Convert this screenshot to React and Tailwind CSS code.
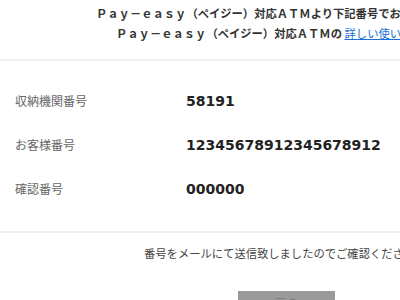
import React from 'react';

const rows = [
  { label: '収納機関番号', value: '58191' },
  { label: 'お客様番号', value: '12345678912345678912' },
  { label: '確認番号', value: '000000' },
];

const PayeasyInfo = () => {
  return (
    <div className="w-[400px] h-[300px] overflow-hidden bg-white font-['Noto_Sans_CJK_JP',sans-serif]">
      {/* header note */}
      <div className="pt-[3px] whitespace-nowrap text-[11.3px] leading-[20px] font-bold text-[#333]">
        <p className="pl-[96px]">Ｐａｙ－ｅａｓｙ（ペイジー）対応ＡＴＭより下記番号でお支払いください。</p>
        <p className="pl-[116px]">
          Ｐａｙ－ｅａｓｙ（ペイジー）対応ＡＴＭの{' '}
          <a href="#" className="font-normal text-[#1a6fd9] underline">詳しい使い方はこちら</a>
        </p>
      </div>

      <div className="mt-[16px] h-[2px] bg-[#efefef]" />

      {/* numbers */}
      <div className="pt-[18px]">
        {rows.map((row) => (
          <div key={row.label} className="flex items-center h-[44px]">
            <span className="w-[186px] pl-[15px] text-[12px] text-[#666]">{row.label}</span>
            <span className="font-['DejaVu_Sans',sans-serif] font-bold text-[14px] text-[#222]">{row.value}</span>
          </div>
        ))}
      </div>

      <div className="mt-[20px] h-[2px] bg-[#efefef]" />

      <p className="mt-[10px] pl-[144px] whitespace-nowrap text-[11.3px] leading-[20px] text-[#444]">
        番号をメールにて送信致しましたのでご確認ください。
      </p>

      <div className="mt-[28px] ml-[238px] w-[97px] h-[36px] bg-[#9a9a9a] flex justify-center pt-[6px]">
        <span className="text-[12px] leading-[14px] text-[#7a7a7a]">戻る</span>
      </div>
    </div>
  );
};

export default function App() {
  return <PayeasyInfo />;
}
